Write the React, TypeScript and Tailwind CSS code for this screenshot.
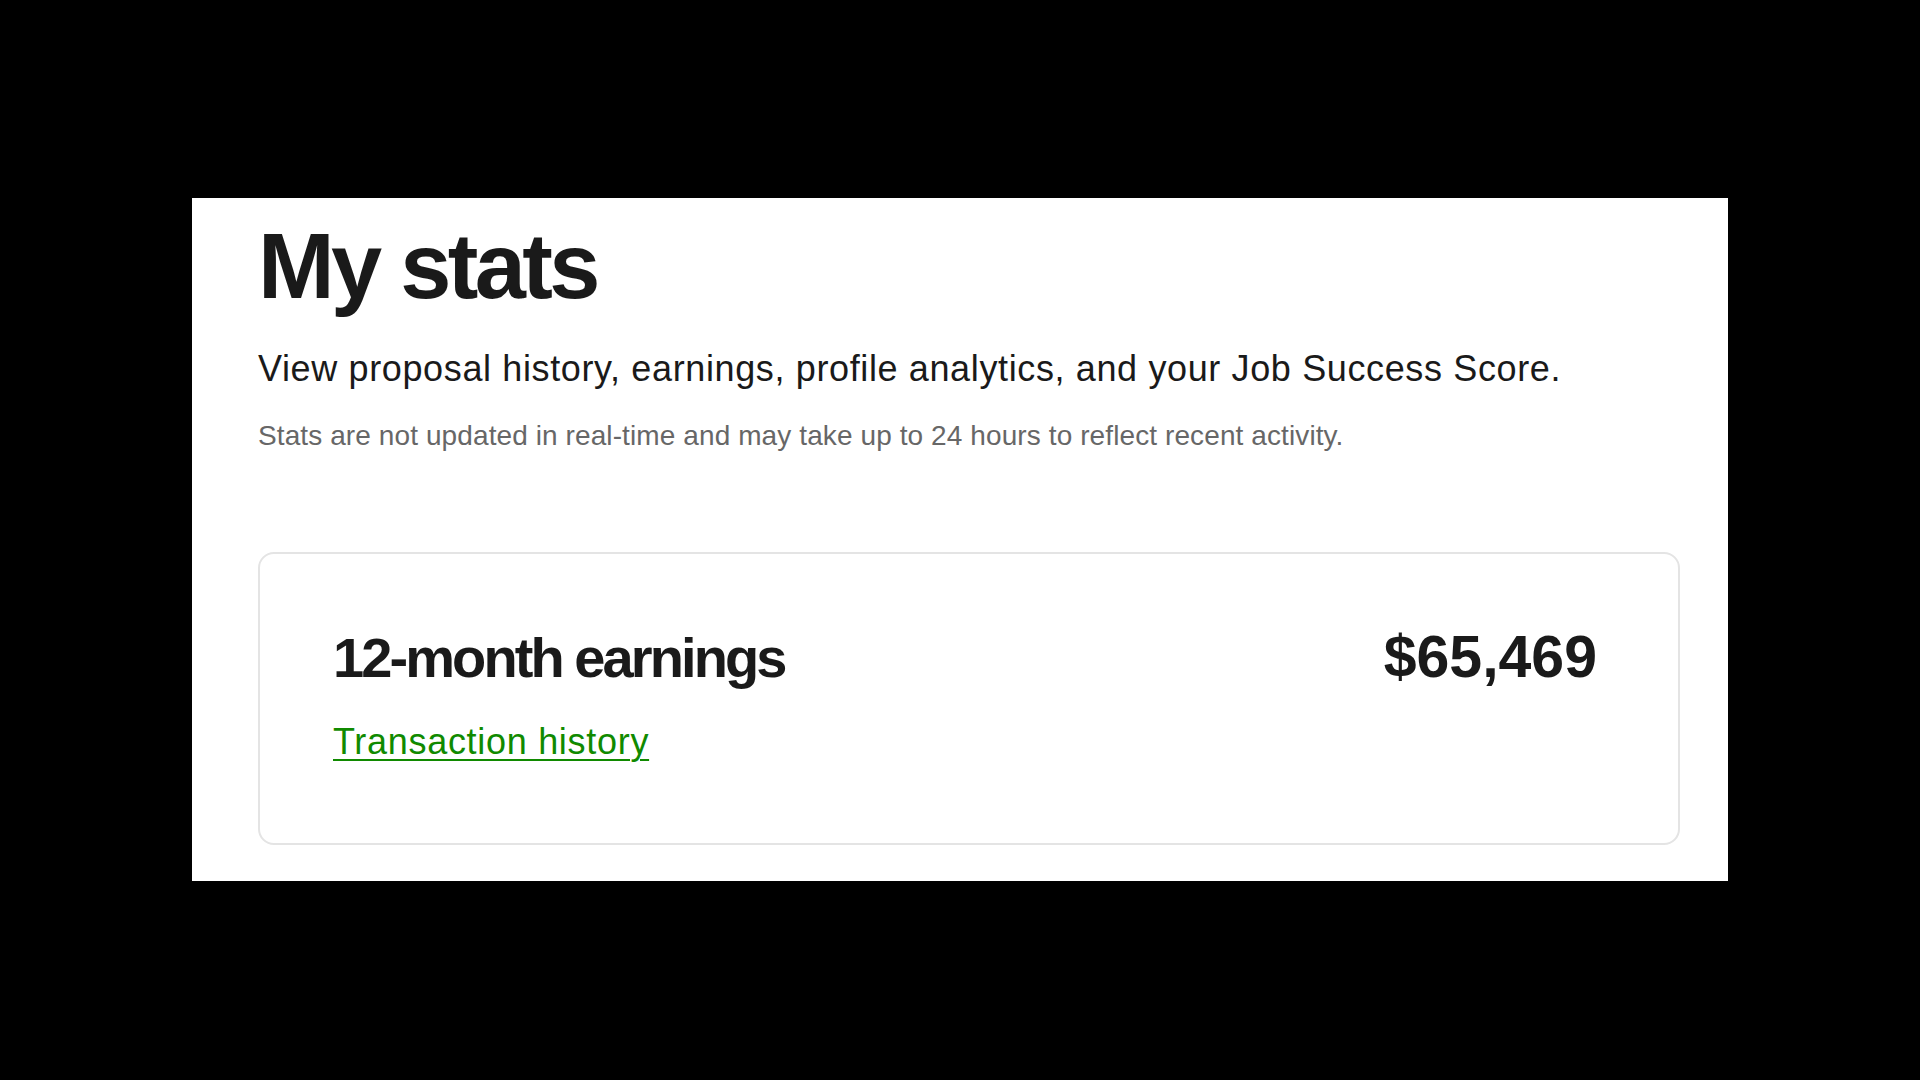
import React from "react";

export default function App() {
  const font = { fontFamily: '"Liberation Sans", Arial, Helvetica, sans-serif' };
  return (
    <div className="w-[1920px] h-[1080px] bg-black overflow-hidden" style={font}>
      <div className="ml-[192px] mt-[198px] w-[1536px] h-[683px] bg-white pl-[66px] pr-[48px] pt-[22px]">
        <h1 className="text-[92px] leading-[92px] font-bold tracking-[-0.04em] text-[#1a1a1a]">My stats</h1>
        <p className="mt-[35px] text-[36px] leading-[44px] tracking-[0.63px] text-[#1a1a1a]">
          View proposal history, earnings, profile analytics, and your Job Success Score.
        </p>
        <p className="mt-[28px] text-[28px] leading-[34px] tracking-[0.1px] text-[#676767]">
          Stats are not updated in real-time and may take up to 24 hours to reflect recent activity.
        </p>
        <div className="mt-[99px] border-2 border-[#e4e4e4] rounded-[16px] pl-[73px] pr-[81px] pt-[71px] pb-[79px]">
          <div className="flex items-baseline justify-between">
            <h2 className="text-[56px] leading-[64px] font-bold tracking-[-0.052em] text-[#1a1a1a]">12-month earnings</h2>
            <span className="text-[59px] leading-[64px] font-bold text-[#1a1a1a]">$65,469</span>
          </div>
          <a href="#" className="block w-fit mt-[30px] text-[36px] leading-[44px] tracking-[0.7px] text-[#108a00] underline underline-offset-[5px] decoration-2">
            Transaction history
          </a>
        </div>
      </div>
    </div>
  );
}
